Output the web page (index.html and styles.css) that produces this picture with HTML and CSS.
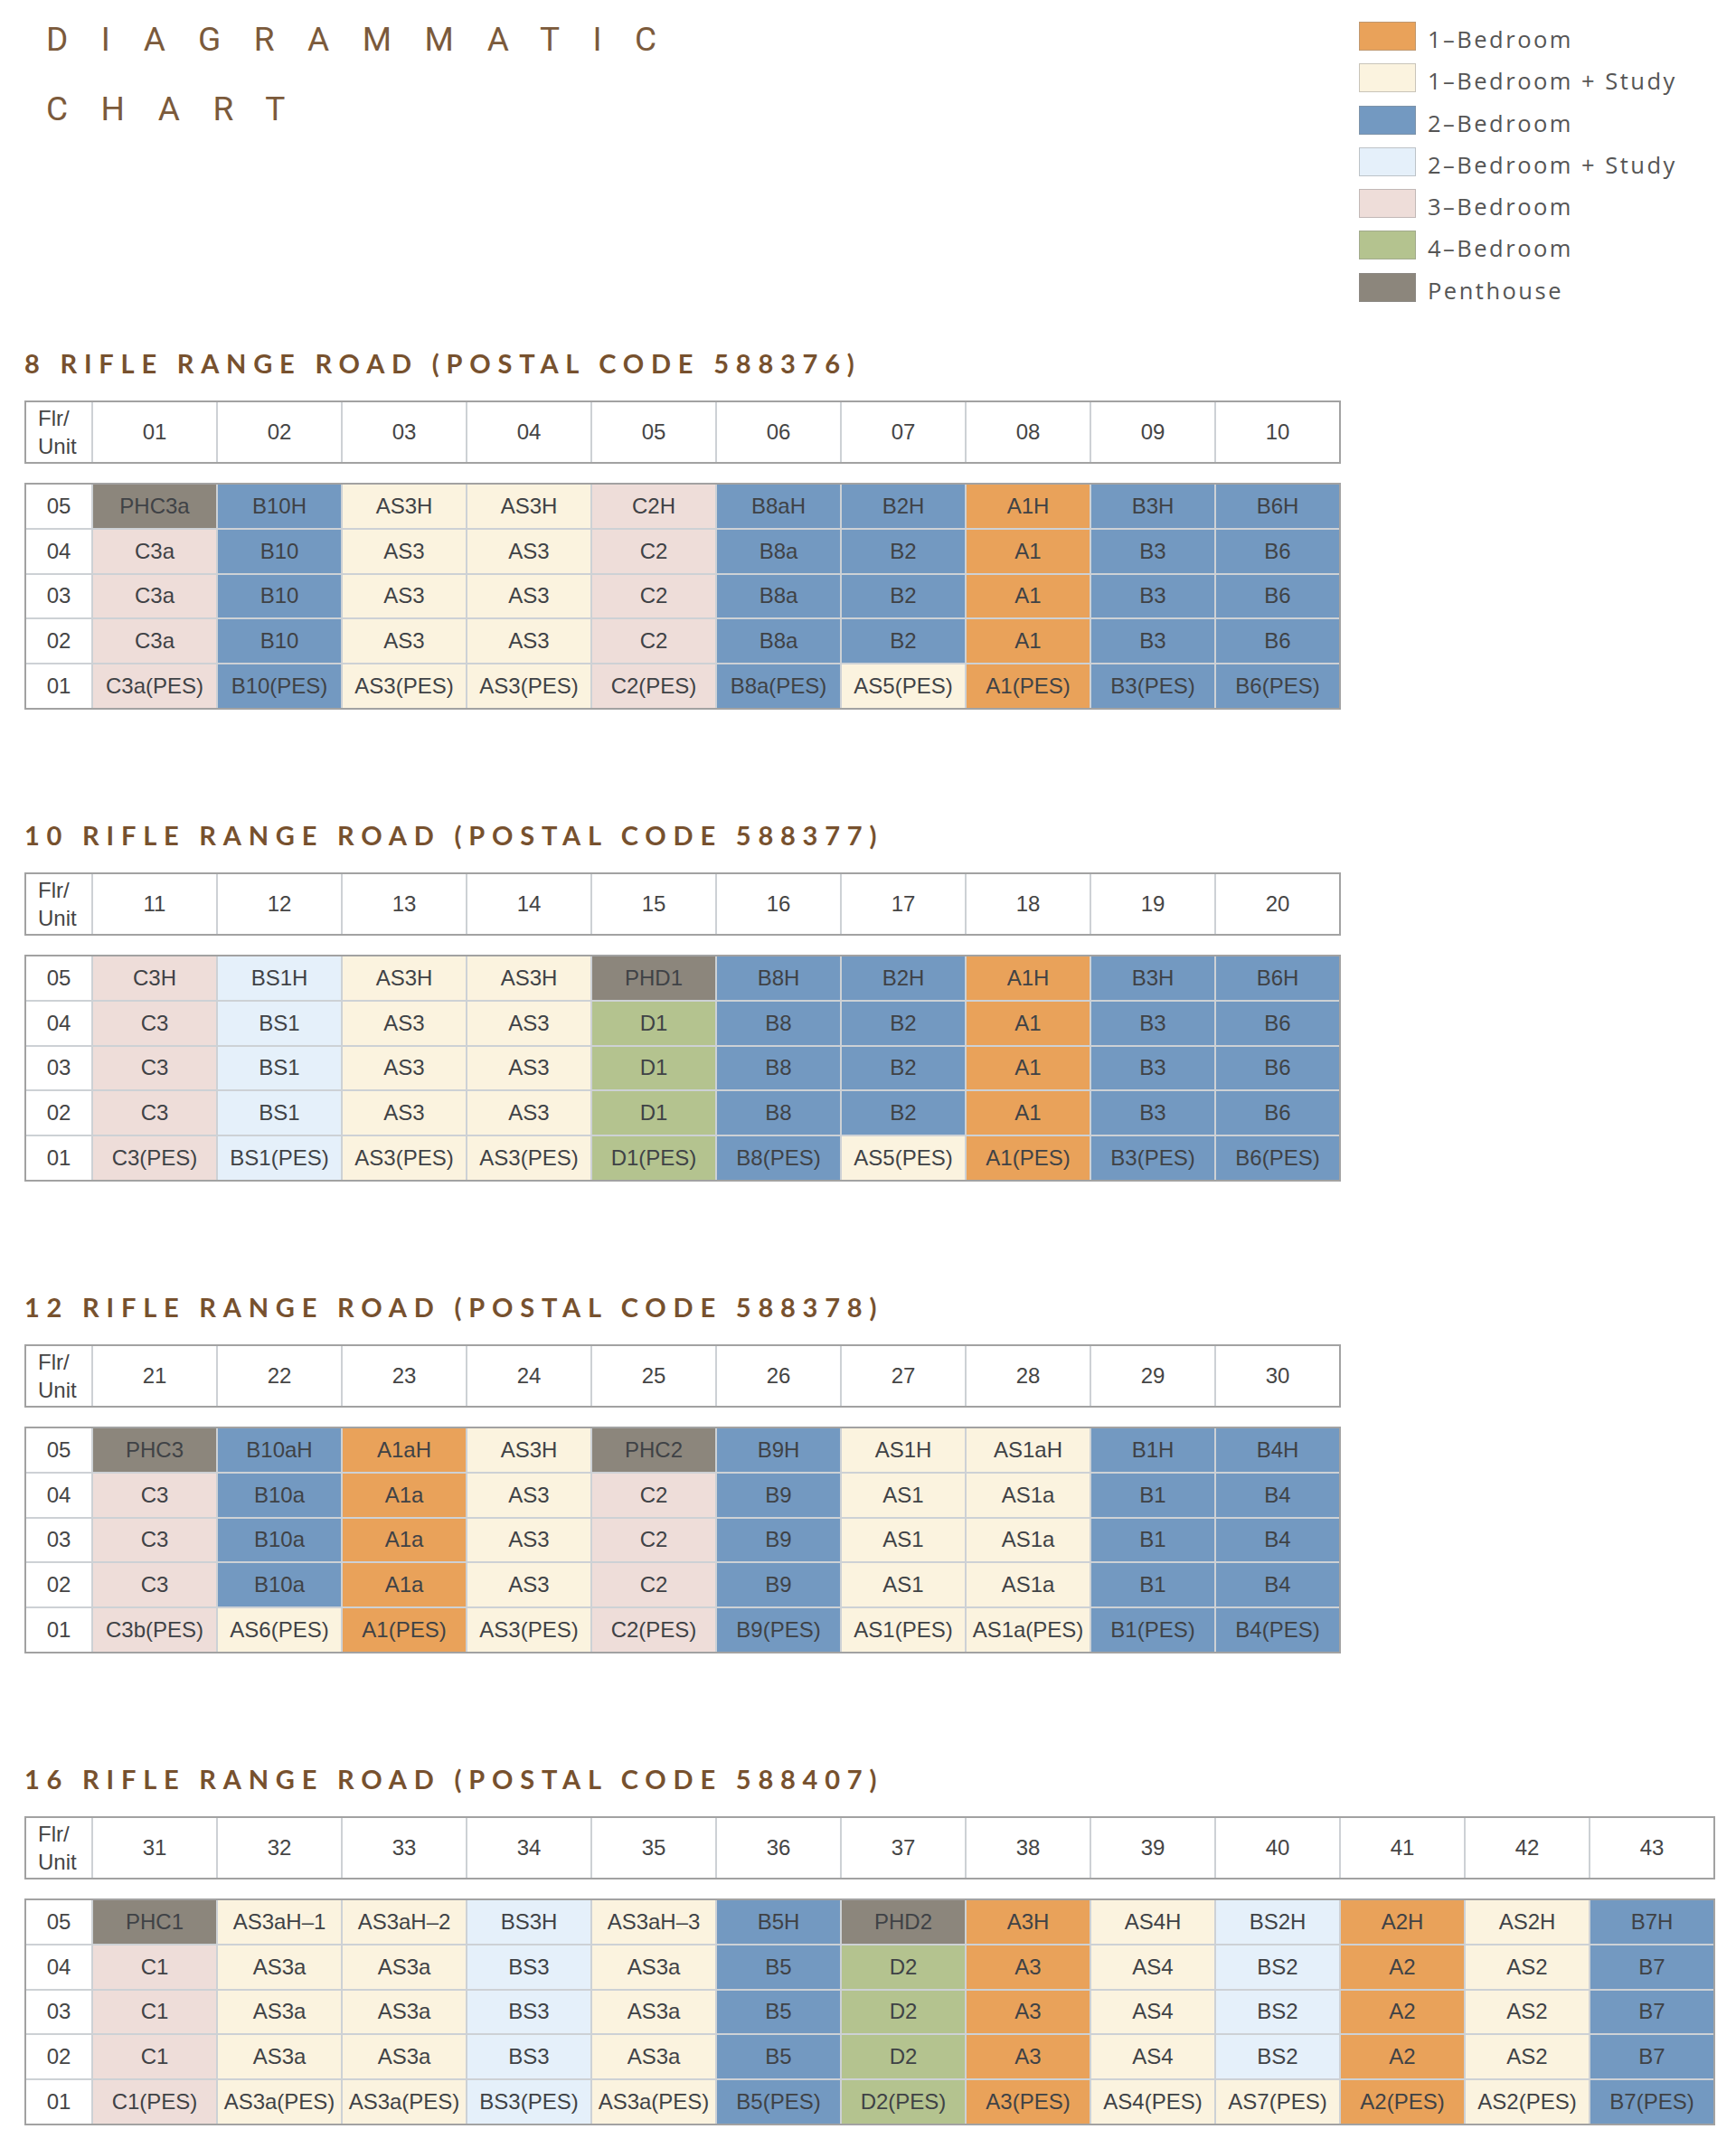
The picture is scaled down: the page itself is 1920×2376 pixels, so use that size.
FILE: index.html
```html
<!DOCTYPE html>
<html lang="en">
<head>
<meta charset="utf-8">
<title>Diagrammatic Chart</title>
<link rel="stylesheet" href="styles.css">
</head>
<body>
<div class="page">
  <header class="top">
    <h1 class="title"><span class="title-line">DIAGRAMMATIC</span><span class="title-line">CHART</span></h1>
    <ul class="legend">
      <li class="legend-item"><span class="swatch c-o"></span><span class="legend-text">1–Bedroom</span></li>
      <li class="legend-item"><span class="swatch c-c"></span><span class="legend-text">1–Bedroom + Study</span></li>
      <li class="legend-item"><span class="swatch c-b"></span><span class="legend-text">2–Bedroom</span></li>
      <li class="legend-item"><span class="swatch c-l"></span><span class="legend-text">2–Bedroom + Study</span></li>
      <li class="legend-item"><span class="swatch c-p"></span><span class="legend-text">3–Bedroom</span></li>
      <li class="legend-item"><span class="swatch c-g"></span><span class="legend-text">4–Bedroom</span></li>
      <li class="legend-item"><span class="swatch c-x"></span><span class="legend-text">Penthouse</span></li>
    </ul>
  </header>

  <main class="buildings">
    <section class="building">
      <h2 class="building-title">8 RIFLE RANGE ROAD (POSTAL CODE 588376)</h2>
      <div class="units head">
        <div class="cell corner">Flr/<br>Unit</div>
        <div class="cell">01</div><div class="cell">02</div><div class="cell">03</div><div class="cell">04</div><div class="cell">05</div><div class="cell">06</div><div class="cell">07</div><div class="cell">08</div><div class="cell">09</div><div class="cell">10</div>
      </div>
      <div class="units data">
        <div class="cell">05</div>
        <div class="cell c-x">PHC3a</div><div class="cell c-b">B10H</div><div class="cell c-c">AS3H</div><div class="cell c-c">AS3H</div><div class="cell c-p">C2H</div><div class="cell c-b">B8aH</div><div class="cell c-b">B2H</div><div class="cell c-o">A1H</div><div class="cell c-b">B3H</div><div class="cell c-b">B6H</div>
        <div class="cell">04</div>
        <div class="cell c-p">C3a</div><div class="cell c-b">B10</div><div class="cell c-c">AS3</div><div class="cell c-c">AS3</div><div class="cell c-p">C2</div><div class="cell c-b">B8a</div><div class="cell c-b">B2</div><div class="cell c-o">A1</div><div class="cell c-b">B3</div><div class="cell c-b">B6</div>
        <div class="cell">03</div>
        <div class="cell c-p">C3a</div><div class="cell c-b">B10</div><div class="cell c-c">AS3</div><div class="cell c-c">AS3</div><div class="cell c-p">C2</div><div class="cell c-b">B8a</div><div class="cell c-b">B2</div><div class="cell c-o">A1</div><div class="cell c-b">B3</div><div class="cell c-b">B6</div>
        <div class="cell">02</div>
        <div class="cell c-p">C3a</div><div class="cell c-b">B10</div><div class="cell c-c">AS3</div><div class="cell c-c">AS3</div><div class="cell c-p">C2</div><div class="cell c-b">B8a</div><div class="cell c-b">B2</div><div class="cell c-o">A1</div><div class="cell c-b">B3</div><div class="cell c-b">B6</div>
        <div class="cell">01</div>
        <div class="cell c-p">C3a(PES)</div><div class="cell c-b">B10(PES)</div><div class="cell c-c">AS3(PES)</div><div class="cell c-c">AS3(PES)</div><div class="cell c-p">C2(PES)</div><div class="cell c-b">B8a(PES)</div><div class="cell c-c">AS5(PES)</div><div class="cell c-o">A1(PES)</div><div class="cell c-b">B3(PES)</div><div class="cell c-b">B6(PES)</div>
      </div>
    </section>

    <section class="building">
      <h2 class="building-title">10 RIFLE RANGE ROAD (POSTAL CODE 588377)</h2>
      <div class="units head">
        <div class="cell corner">Flr/<br>Unit</div>
        <div class="cell">11</div><div class="cell">12</div><div class="cell">13</div><div class="cell">14</div><div class="cell">15</div><div class="cell">16</div><div class="cell">17</div><div class="cell">18</div><div class="cell">19</div><div class="cell">20</div>
      </div>
      <div class="units data">
        <div class="cell">05</div>
        <div class="cell c-p">C3H</div><div class="cell c-l">BS1H</div><div class="cell c-c">AS3H</div><div class="cell c-c">AS3H</div><div class="cell c-x">PHD1</div><div class="cell c-b">B8H</div><div class="cell c-b">B2H</div><div class="cell c-o">A1H</div><div class="cell c-b">B3H</div><div class="cell c-b">B6H</div>
        <div class="cell">04</div>
        <div class="cell c-p">C3</div><div class="cell c-l">BS1</div><div class="cell c-c">AS3</div><div class="cell c-c">AS3</div><div class="cell c-g">D1</div><div class="cell c-b">B8</div><div class="cell c-b">B2</div><div class="cell c-o">A1</div><div class="cell c-b">B3</div><div class="cell c-b">B6</div>
        <div class="cell">03</div>
        <div class="cell c-p">C3</div><div class="cell c-l">BS1</div><div class="cell c-c">AS3</div><div class="cell c-c">AS3</div><div class="cell c-g">D1</div><div class="cell c-b">B8</div><div class="cell c-b">B2</div><div class="cell c-o">A1</div><div class="cell c-b">B3</div><div class="cell c-b">B6</div>
        <div class="cell">02</div>
        <div class="cell c-p">C3</div><div class="cell c-l">BS1</div><div class="cell c-c">AS3</div><div class="cell c-c">AS3</div><div class="cell c-g">D1</div><div class="cell c-b">B8</div><div class="cell c-b">B2</div><div class="cell c-o">A1</div><div class="cell c-b">B3</div><div class="cell c-b">B6</div>
        <div class="cell">01</div>
        <div class="cell c-p">C3(PES)</div><div class="cell c-l">BS1(PES)</div><div class="cell c-c">AS3(PES)</div><div class="cell c-c">AS3(PES)</div><div class="cell c-g">D1(PES)</div><div class="cell c-b">B8(PES)</div><div class="cell c-c">AS5(PES)</div><div class="cell c-o">A1(PES)</div><div class="cell c-b">B3(PES)</div><div class="cell c-b">B6(PES)</div>
      </div>
    </section>

    <section class="building">
      <h2 class="building-title">12 RIFLE RANGE ROAD (POSTAL CODE 588378)</h2>
      <div class="units head">
        <div class="cell corner">Flr/<br>Unit</div>
        <div class="cell">21</div><div class="cell">22</div><div class="cell">23</div><div class="cell">24</div><div class="cell">25</div><div class="cell">26</div><div class="cell">27</div><div class="cell">28</div><div class="cell">29</div><div class="cell">30</div>
      </div>
      <div class="units data">
        <div class="cell">05</div>
        <div class="cell c-x">PHC3</div><div class="cell c-b">B10aH</div><div class="cell c-o">A1aH</div><div class="cell c-c">AS3H</div><div class="cell c-x">PHC2</div><div class="cell c-b">B9H</div><div class="cell c-c">AS1H</div><div class="cell c-c">AS1aH</div><div class="cell c-b">B1H</div><div class="cell c-b">B4H</div>
        <div class="cell">04</div>
        <div class="cell c-p">C3</div><div class="cell c-b">B10a</div><div class="cell c-o">A1a</div><div class="cell c-c">AS3</div><div class="cell c-p">C2</div><div class="cell c-b">B9</div><div class="cell c-c">AS1</div><div class="cell c-c">AS1a</div><div class="cell c-b">B1</div><div class="cell c-b">B4</div>
        <div class="cell">03</div>
        <div class="cell c-p">C3</div><div class="cell c-b">B10a</div><div class="cell c-o">A1a</div><div class="cell c-c">AS3</div><div class="cell c-p">C2</div><div class="cell c-b">B9</div><div class="cell c-c">AS1</div><div class="cell c-c">AS1a</div><div class="cell c-b">B1</div><div class="cell c-b">B4</div>
        <div class="cell">02</div>
        <div class="cell c-p">C3</div><div class="cell c-b">B10a</div><div class="cell c-o">A1a</div><div class="cell c-c">AS3</div><div class="cell c-p">C2</div><div class="cell c-b">B9</div><div class="cell c-c">AS1</div><div class="cell c-c">AS1a</div><div class="cell c-b">B1</div><div class="cell c-b">B4</div>
        <div class="cell">01</div>
        <div class="cell c-p">C3b(PES)</div><div class="cell c-c">AS6(PES)</div><div class="cell c-o">A1(PES)</div><div class="cell c-c">AS3(PES)</div><div class="cell c-p">C2(PES)</div><div class="cell c-b">B9(PES)</div><div class="cell c-c">AS1(PES)</div><div class="cell c-c">AS1a(PES)</div><div class="cell c-b">B1(PES)</div><div class="cell c-b">B4(PES)</div>
      </div>
    </section>

    <section class="building">
      <h2 class="building-title">16 RIFLE RANGE ROAD (POSTAL CODE 588407)</h2>
      <div class="units head wide">
        <div class="cell corner">Flr/<br>Unit</div>
        <div class="cell">31</div><div class="cell">32</div><div class="cell">33</div><div class="cell">34</div><div class="cell">35</div><div class="cell">36</div><div class="cell">37</div><div class="cell">38</div><div class="cell">39</div><div class="cell">40</div><div class="cell">41</div><div class="cell">42</div><div class="cell">43</div>
      </div>
      <div class="units data wide">
        <div class="cell">05</div>
        <div class="cell c-x">PHC1</div><div class="cell c-c">AS3aH–1</div><div class="cell c-c">AS3aH–2</div><div class="cell c-l">BS3H</div><div class="cell c-c">AS3aH–3</div><div class="cell c-b">B5H</div><div class="cell c-x">PHD2</div><div class="cell c-o">A3H</div><div class="cell c-c">AS4H</div><div class="cell c-l">BS2H</div><div class="cell c-o">A2H</div><div class="cell c-c">AS2H</div><div class="cell c-b">B7H</div>
        <div class="cell">04</div>
        <div class="cell c-p">C1</div><div class="cell c-c">AS3a</div><div class="cell c-c">AS3a</div><div class="cell c-l">BS3</div><div class="cell c-c">AS3a</div><div class="cell c-b">B5</div><div class="cell c-g">D2</div><div class="cell c-o">A3</div><div class="cell c-c">AS4</div><div class="cell c-l">BS2</div><div class="cell c-o">A2</div><div class="cell c-c">AS2</div><div class="cell c-b">B7</div>
        <div class="cell">03</div>
        <div class="cell c-p">C1</div><div class="cell c-c">AS3a</div><div class="cell c-c">AS3a</div><div class="cell c-l">BS3</div><div class="cell c-c">AS3a</div><div class="cell c-b">B5</div><div class="cell c-g">D2</div><div class="cell c-o">A3</div><div class="cell c-c">AS4</div><div class="cell c-l">BS2</div><div class="cell c-o">A2</div><div class="cell c-c">AS2</div><div class="cell c-b">B7</div>
        <div class="cell">02</div>
        <div class="cell c-p">C1</div><div class="cell c-c">AS3a</div><div class="cell c-c">AS3a</div><div class="cell c-l">BS3</div><div class="cell c-c">AS3a</div><div class="cell c-b">B5</div><div class="cell c-g">D2</div><div class="cell c-o">A3</div><div class="cell c-c">AS4</div><div class="cell c-l">BS2</div><div class="cell c-o">A2</div><div class="cell c-c">AS2</div><div class="cell c-b">B7</div>
        <div class="cell">01</div>
        <div class="cell c-p">C1(PES)</div><div class="cell c-c">AS3a(PES)</div><div class="cell c-c">AS3a(PES)</div><div class="cell c-l">BS3(PES)</div><div class="cell c-c">AS3a(PES)</div><div class="cell c-b">B5(PES)</div><div class="cell c-g">D2(PES)</div><div class="cell c-o">A3(PES)</div><div class="cell c-c">AS4(PES)</div><div class="cell c-c">AS7(PES)</div><div class="cell c-o">A2(PES)</div><div class="cell c-c">AS2(PES)</div><div class="cell c-b">B7(PES)</div>
      </div>
    </section>
  </main>
</div>
</body>
</html>
```

FILE: styles.css
```css
* { box-sizing: border-box; }

html, body {
  margin: 0;
  padding: 0;
  background: #ffffff;
}

body {
  font-family: "Liberation Sans", Arial, sans-serif;
  color: #454545;
}

.page {
  padding: 0 27px;
}

/* ---------- top area ---------- */
.top {
  display: grid;
  grid-template-columns: 1476px 1fr;
  align-items: start;
}

.title {
  margin: 5px 0 0 24px;
  display: flex;
  flex-direction: column;
  font-family: Roboto, "Liberation Sans", sans-serif;
  font-weight: 400;
  font-size: 37px;
  line-height: 77px;
  letter-spacing: 36.5px;
  color: #7b5a3b;
}

.title-line { display: block; }

.legend {
  list-style: none;
  margin: 0;
  padding: 24px 0 0 0;
  display: flex;
  flex-direction: column;
  gap: 11.25px;
}

.legend-item {
  display: flex;
  align-items: flex-start;
  gap: 13px;
  height: 35px;
}

.swatch {
  flex: none;
  width: 63px;
  height: 32px;
  border: 1px solid rgba(140, 140, 140, 0.45);
}

.legend-text {
  padding-top: 3px;
  font-family: "Open Sans", sans-serif;
  font-size: 25.5px;
  line-height: 32px;
  letter-spacing: 2.5px;
  color: #555555;
  white-space: nowrap;
}

/* ---------- buildings ---------- */
.buildings {
  margin-top: 50.5px;
  display: flex;
  flex-direction: column;
  gap: 124px;
}

.building {
  display: flex;
  flex-direction: column;
  align-items: flex-start;
}

.building-title {
  margin: 0 0 26px 0;
  font-family: Lato, "Liberation Sans", sans-serif;
  font-weight: 700;
  font-size: 29px;
  line-height: 30px;
  letter-spacing: 7.8px;
  color: #77512e;
  white-space: nowrap;
}

.units {
  display: grid;
  grid-template-columns: 72px repeat(10, 136px);
  gap: 2px;
  background: #cdd1d5;
  border: 2px solid #a2a2a2;
}

.units.wide {
  grid-template-columns: 72px repeat(13, 136px);
}

.units.head {
  grid-auto-rows: 66px;
  margin-bottom: 21px;
}

.units.head .cell { background: #ffffff; }

.units.data {
  grid-auto-rows: 47.8px;
}

.cell {
  display: flex;
  align-items: center;
  justify-content: center;
  background: #ffffff;
  font-size: 24px;
  line-height: 1;
  color: #454545;
  white-space: nowrap;
}

.cell.corner {
  justify-content: flex-start;
  padding-left: 13px;
  line-height: 31px;
  text-align: left;
}

/* unit type colours */
.c-o { background: #e9a25a; }
.c-c { background: #fbf3df; }
.c-b { background: #7399c1; }
.c-l { background: #e5f0fa; }
.c-p { background: #eeddd9; }
.c-g { background: #b4c38f; }
.c-x { background: #8c867c; }

.cell.c-o,
.cell.c-c,
.cell.c-b,
.cell.c-l,
.cell.c-p,
.cell.c-g,
.cell.c-x { color: #3f4246; }
```
